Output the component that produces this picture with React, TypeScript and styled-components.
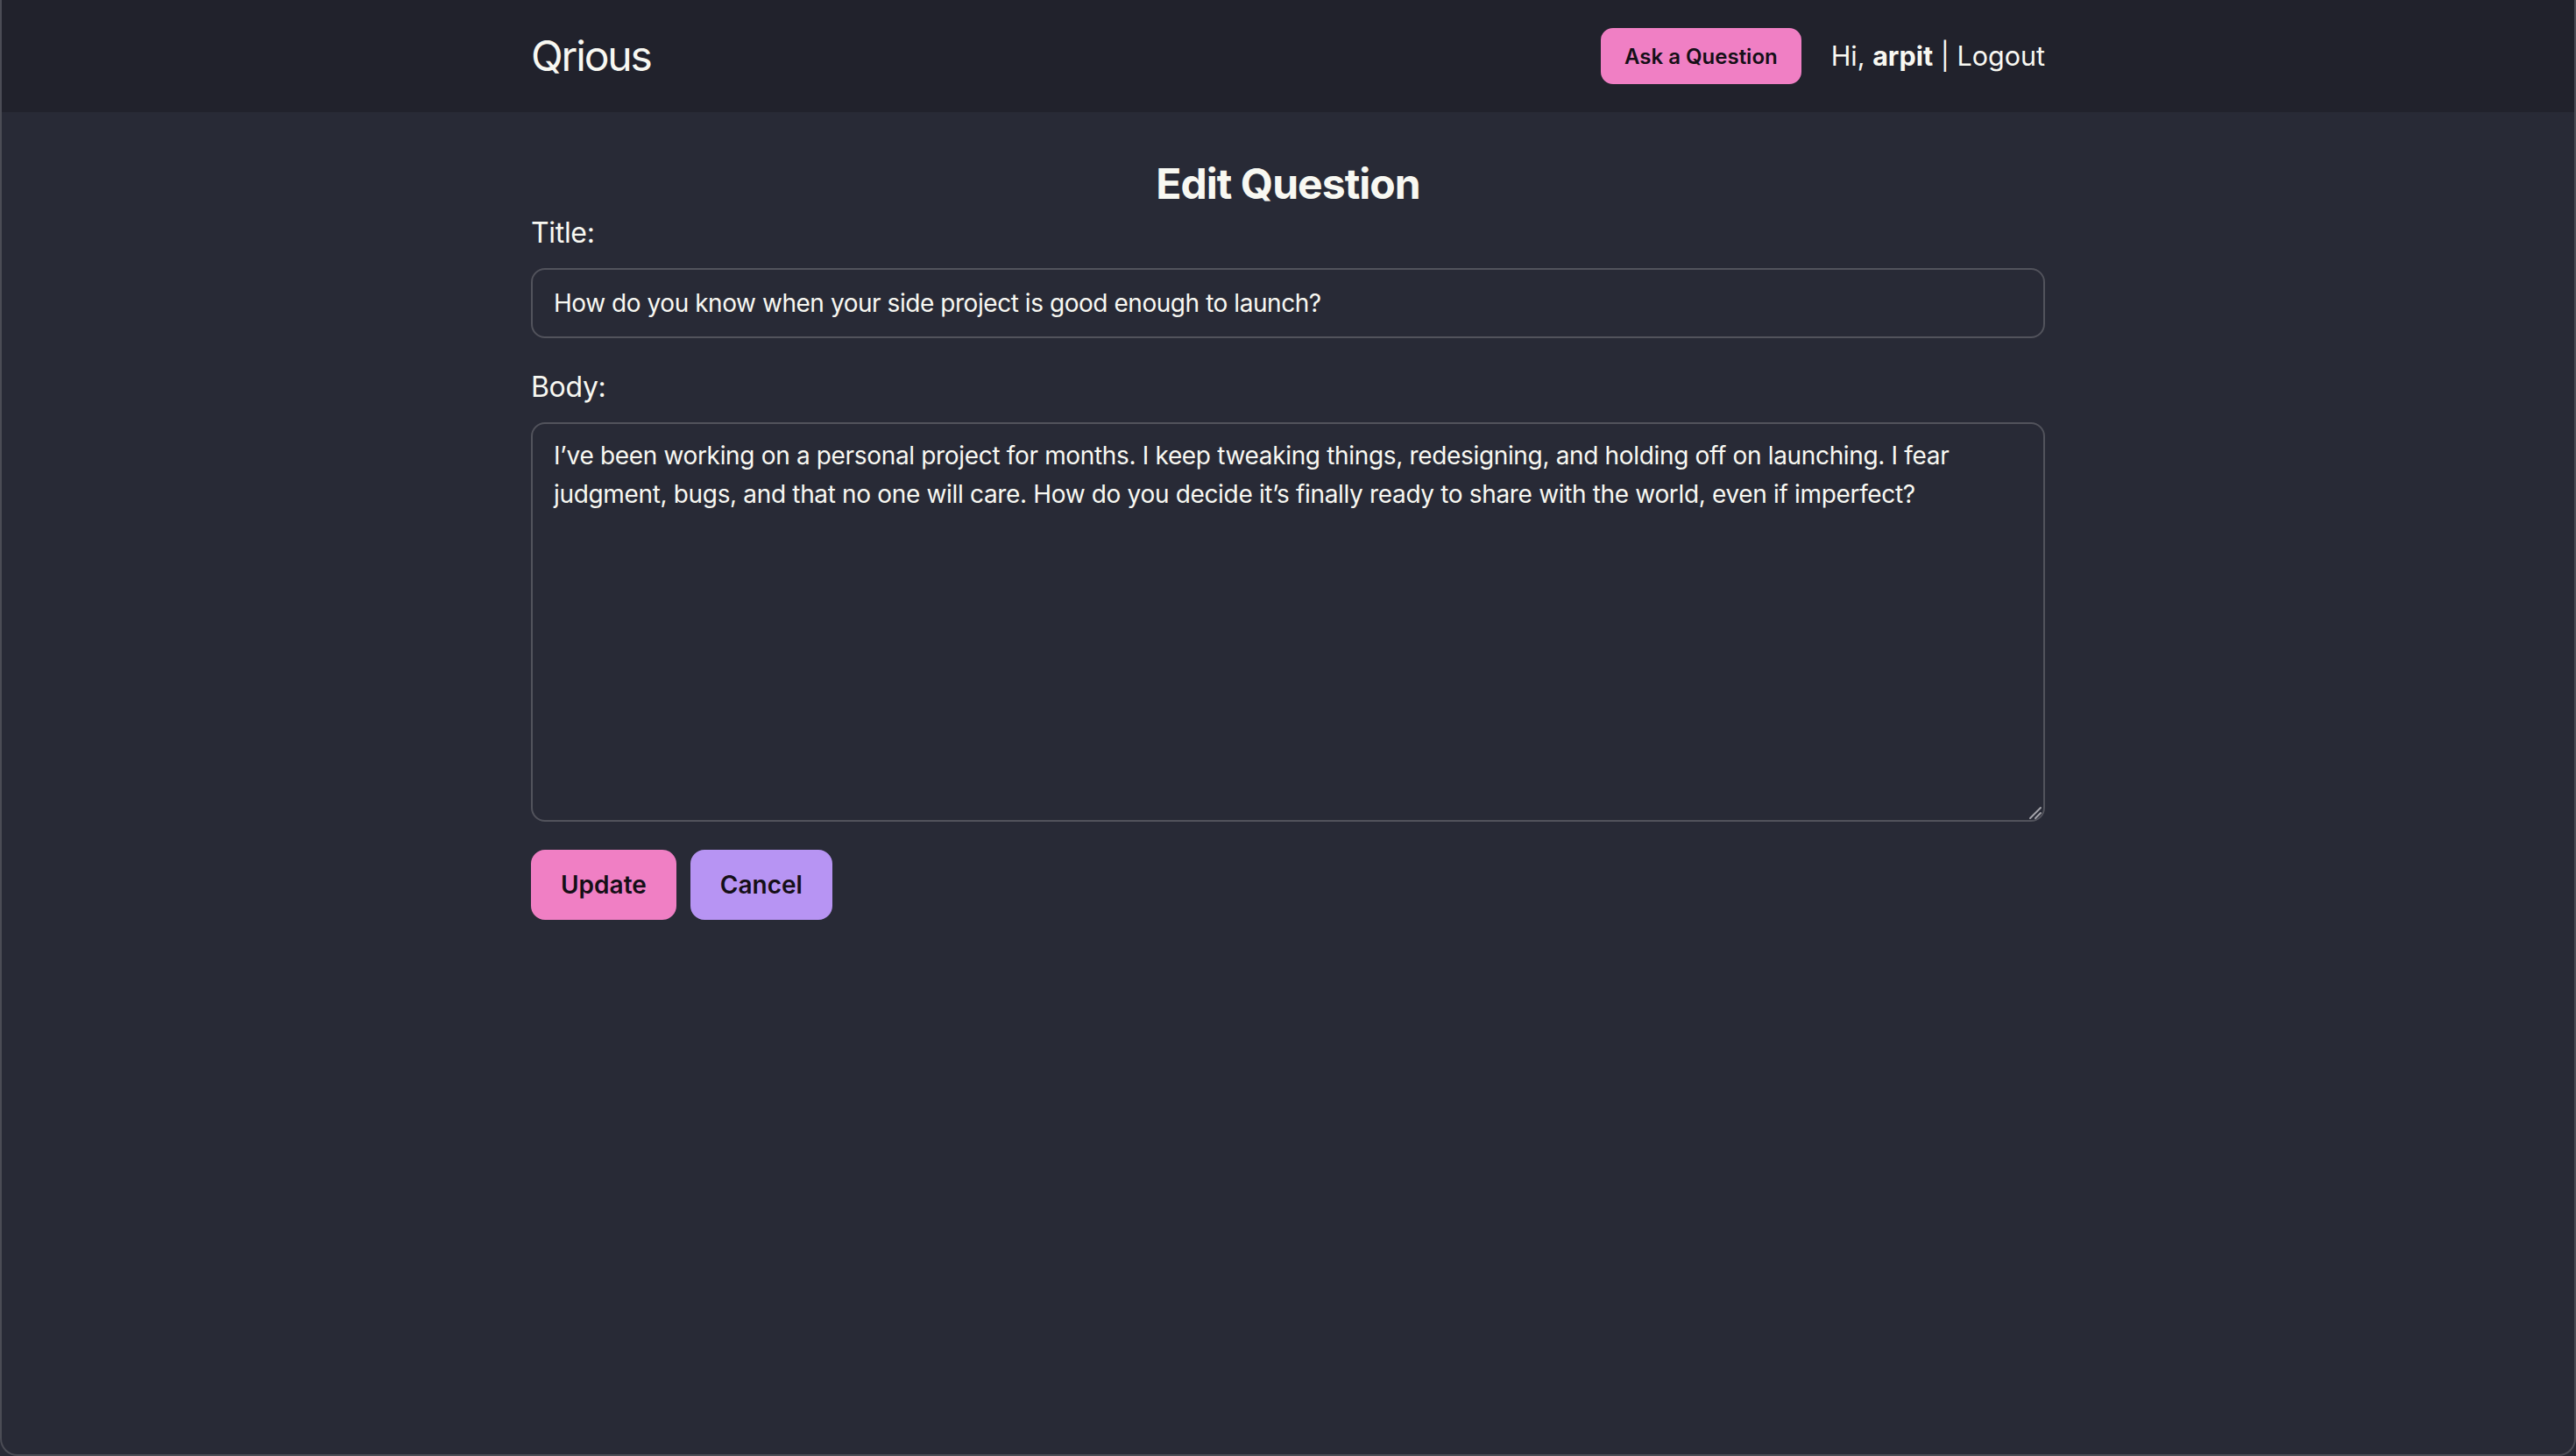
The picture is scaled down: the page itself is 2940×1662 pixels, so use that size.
import React from "react";
import styled, { createGlobalStyle } from "styled-components";

const colors = {
    header: "#21222c",
    page: "#282a36",
    text: "#f8f8f2",
    border: "#52535c",
    frame: "#4b4c55",
    grip: "#a3a3aa",
    pink: "#f07fc4",
    purple: "#b794f3",
    buttonText: "#150f17",
};

const GlobalStyle = createGlobalStyle`
    html, body {
        margin: 0;
        padding: 0;
        background: ${colors.page};
    }

    body {
        font-family: Inter, "Noto Sans", "Liberation Sans", sans-serif;
        color: ${colors.text};
        -webkit-font-smoothing: antialiased;
    }

    * {
        box-sizing: border-box;
    }
`;

const Frame = styled.div`
    height: 1662px;
    display: flex;
    flex-direction: column;
    background: ${colors.page};
    border: 2px solid ${colors.frame};
    border-top: none;
    border-radius: 0 0 20px 20px;
    overflow: hidden;
`;

const Header = styled.header`
    height: 128px;
    background: ${colors.header};
    display: flex;
    flex-shrink: 0;
`;

const Container = styled.div`
    width: 100%;
    max-width: 1792px;
    margin: 0 auto;
    padding: 0 32px;
`;

const HeaderInner = styled(Container)`
    display: flex;
    align-items: center;
    justify-content: space-between;
`;

const Logo = styled.a`
    font-size: 48px;
    line-height: 64px;
    font-weight: 400;
    letter-spacing: -0.045em;
    color: ${colors.text};
    text-decoration: none;
`;

const NavRight = styled.nav`
    display: flex;
    align-items: center;
    gap: 34px;
`;

const Button = styled.button<{ $tone: "pink" | "purple"; $small?: boolean }>`
    display: inline-flex;
    align-items: center;
    justify-content: center;
    height: ${p => (p.$small ? 64 : 80)}px;
    padding: 0 ${p => (p.$small ? 25 : 32)}px;
    border: 2px solid ${p => (p.$tone === "pink" ? colors.pink : colors.purple)};
    border-radius: ${p => (p.$small ? 14 : 16)}px;
    background: ${p => (p.$tone === "pink" ? colors.pink : colors.purple)};
    color: ${colors.buttonText};
    font-family: inherit;
    font-size: ${p => (p.$small ? 24 : 28)}px;
    font-weight: 600;
    cursor: pointer;
`;

const Greeting = styled.span`
    font-size: 30.5px;
    line-height: 44px;

    strong {
        font-weight: 700;
    }
`;

const LogoutLink = styled.a`
    color: ${colors.text};
    text-decoration: none;
`;

const Main = styled(Container)`
    padding-top: 50px;
`;

const Heading = styled.h1`
    margin: 0;
    text-align: center;
    font-size: 48px;
    line-height: 64px;
    font-weight: 700;
    letter-spacing: -0.02em;
`;

const Form = styled.form`
    display: flex;
    flex-direction: column;
`;

const Field = styled.div`
    display: flex;
    flex-direction: column;
    gap: 16px;
    margin-bottom: 32px;
`;

const Label = styled.label`
    font-size: 32px;
    line-height: 48px;
    letter-spacing: -0.01em;
`;

const TextInput = styled.input`
    height: 80px;
    padding: 0 24px;
    border: 2px solid ${colors.border};
    border-radius: 16px;
    background: ${colors.page};
    color: ${colors.text};
    font-family: inherit;
    font-size: 28px;
    letter-spacing: -0.016em;
    outline: none;
`;

const AreaWrap = styled.div`
    position: relative;
    display: flex;
    flex-direction: column;
`;

const TextArea = styled.textarea`
    height: 456px;
    padding: 14px 24px;
    border: 2px solid ${colors.border};
    border-radius: 16px;
    background: ${colors.page};
    color: ${colors.text};
    font-family: inherit;
    font-size: 28px;
    line-height: 44px;
    letter-spacing: -0.012em;
    outline: none;
    resize: none;
`;

const Grip = styled.svg`
    position: absolute;
    right: 3px;
    bottom: 2px;
    width: 16px;
    height: 16px;
    pointer-events: none;
`;

const Actions = styled.div`
    display: flex;
    gap: 16px;
`;

const title = "How do you know when your side project is good enough to launch?";
const body =
    "I\u2019ve been working on a personal project for months. I keep tweaking things, redesigning, and holding off on launching. I fear judgment, bugs, and that no one will care. How do you decide it\u2019s finally ready to share with the world, even if imperfect?";

export default function App() {
    return (
        <>
            <GlobalStyle />
            <Frame>
                <Header>
                    <HeaderInner>
                        <Logo href="#">Qrious</Logo>
                        <NavRight>
                            <Button $tone="pink" $small type="button">
                                Ask a Question
                            </Button>
                            <Greeting>
                                Hi, <strong>arpit</strong> | <LogoutLink href="#">Logout</LogoutLink>
                            </Greeting>
                        </NavRight>
                    </HeaderInner>
                </Header>
                <Main>
                    <Heading>Edit Question</Heading>
                    <Form onSubmit={e => e.preventDefault()}>
                        <Field>
                            <Label htmlFor="title">Title:</Label>
                            <TextInput id="title" type="text" defaultValue={title} />
                        </Field>
                        <Field>
                            <Label htmlFor="body">Body:</Label>
                            <AreaWrap>
                                <TextArea id="body" defaultValue={body} />
                                <Grip viewBox="0 0 16 16">
                                    <path d="M2 14 L14 2" stroke={colors.grip} strokeWidth="2" strokeLinecap="round" />
                                    <path d="M8 14 L14 8" stroke={colors.grip} strokeWidth="2" strokeLinecap="round" />
                                </Grip>
                            </AreaWrap>
                        </Field>
                        <Actions>
                            <Button $tone="pink" type="submit">
                                Update
                            </Button>
                            <Button $tone="purple" type="button">
                                Cancel
                            </Button>
                        </Actions>
                    </Form>
                </Main>
            </Frame>
        </>
    );
}
